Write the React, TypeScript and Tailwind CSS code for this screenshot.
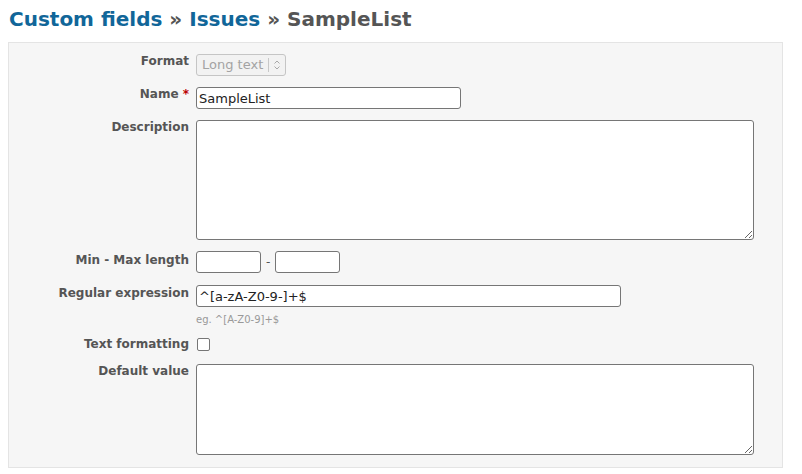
export default function App() {
  const label = "w-[187px] shrink-0 pr-[7px] text-right text-[12px] font-bold leading-[14px] text-[#555]";
  const field = "h-[22px] rounded-[3px] border border-[#767676] bg-white px-[2px] text-[13px] text-[#222] outline-none";

  return (
    <div className="min-h-[474px] bg-white px-2 pt-[7px] font-['DejaVu_Sans',Verdana,sans-serif]">
      <h2 className="ml-px text-[20px] font-bold leading-[24px] text-[#555]">
        <a className="text-[#169]">Custom fields</a> » <a className="text-[#169]">Issues</a> » SampleList
      </h2>

      <div className="mt-[11px] w-[775px] border border-[#e4e4e4] bg-[#f6f6f6] pt-[11px] pb-[12px]">
        <div className="flex flex-col gap-[11px]">
          {/* Format */}
          <div className="flex items-start">
            <label className={label}>Format</label>
            <div className="flex h-[22px] w-[90px] items-center rounded-[3px] border border-[#c5c5c5] bg-[#f2f2f2] text-[13px] text-[#a3a3a3]">
              <span className="px-[5px]">Long text</span>
              <span className="h-[14px] w-px bg-[#c8c8c8]" />
              <svg className="ml-[4px]" width="8" height="12" viewBox="0 0 8 12" fill="none" stroke="#a8a8a8" strokeWidth="1">
                <path d="M1.5 4.5 L4 2 L6.5 4.5" />
                <path d="M1.5 7.5 L4 10 L6.5 7.5" />
              </svg>
            </div>
          </div>

          {/* Name */}
          <div className="flex items-start">
            <label className={label}>
              Name <span className="text-[#bb0000]">*</span>
            </label>
            <input className={field + " w-[265px]"} defaultValue="SampleList" />
          </div>

          {/* Description */}
          <div className="flex items-start">
            <label className={label}>Description</label>
            <textarea className="h-[120px] w-[558px] rounded-[3px] border border-[#767676] bg-white outline-none" />
          </div>

          {/* Min - Max */}
          <div className="flex items-start">
            <label className={label + " pt-[2px]"}>Min - Max length</label>
            <input className={field + " w-[65px]"} />
            <span className="mx-[5px] pt-[4px] text-[12px] leading-[14px] text-[#555]">-</span>
            <input className={field + " w-[65px]"} />
          </div>

          {/* Regex */}
          <div className="mt-px flex items-start">
            <label className={label + " pt-px"}>Regular expression</label>
            <div className="flex flex-col">
              <input className={field + " w-[425px]"} defaultValue="^[a-zA-Z0-9-]+$" />
              <span className="mt-[7px] text-[10px] leading-[12px] text-[#999]">eg. ^[A-Z0-9]+$</span>
            </div>
          </div>

          {/* Text formatting */}
          <div className="flex items-start">
            <label className={label}>Text formatting</label>
            <input
              type="checkbox"
              className="ml-px mt-px h-[13px] w-[13px] appearance-none rounded-[2px] border border-[#767676] bg-white"
            />
          </div>

          {/* Default value */}
          <div className="mt-[2px] flex items-start">
            <label className={label}>Default value</label>
            <textarea className="h-[91px] w-[558px] rounded-[3px] border border-[#767676] bg-white outline-none" />
          </div>
        </div>
      </div>
    </div>
  );
}
